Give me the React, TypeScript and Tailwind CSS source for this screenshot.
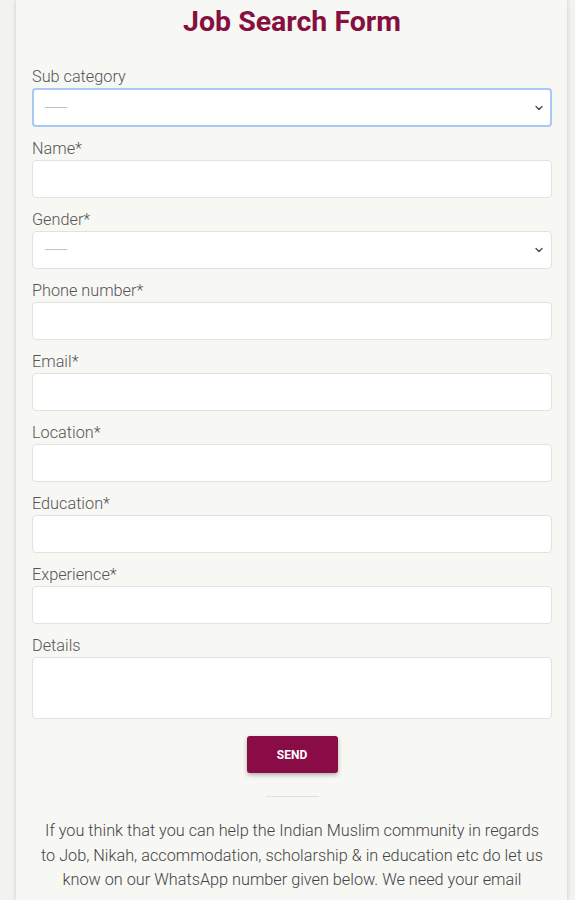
import { ChevronDown } from "lucide-react";

const fields = [
  { label: "Sub category", type: "select", focus: true },
  { label: "Name*", type: "input" },
  { label: "Gender*", type: "select" },
  { label: "Phone number*", type: "input" },
  { label: "Email*", type: "input" },
  { label: "Location*", type: "input" },
  { label: "Education*", type: "input" },
  { label: "Experience*", type: "input" },
];

function Field({ label, type, focus }: { label: string; type: string; focus?: boolean }) {
  return (
    <div className="mb-[11px]">
      <label className="block text-[16.25px] leading-[22px] font-light text-[#555]">{label}</label>
      {type === "select" ? (
        <div
          className={
            focus
              ? "h-[39px] rounded-[4px] bg-white border-2 border-[#a9c8f5] flex items-center justify-between pl-[11px] pr-[5px]"
              : "h-[38px] rounded-[4px] bg-white border border-[#e2e2e0] flex items-center justify-between pl-[12px] pr-[6px]"
          }
        >
          <span className="text-[9px] tracking-[-0.5px] text-[#aaa]">-----------</span>
          <ChevronDown size={12} strokeWidth={2.5} className="text-[#444]" />
        </div>
      ) : (
        <div className="h-[38px] rounded-[4px] bg-white border border-[#e2e2e0]" />
      )}
    </div>
  );
}

export default function App() {
  return (
    <div className="min-h-screen bg-[#f2f2ef] font-['Roboto',sans-serif]">
      <div className="ml-[16px] mr-[8px] min-h-[900px] bg-[#f7f7f4] shadow-[0_0_4px_rgba(0,0,0,0.18)] pl-[16px] pr-[15px] pt-[4px]">
        <h1 className="text-center text-[28.5px] leading-[36px] font-bold text-[#85103f]">Job Search Form</h1>
        <div className="mt-[26px]">
          {fields.map((f) => (
            <Field key={f.label} {...f} />
          ))}
          <label className="block text-[16.25px] leading-[22px] font-light text-[#555]">Details</label>
          <div className="h-[62px] rounded-[4px] bg-white border border-[#e2e2e0]" />
        </div>
        <div className="flex justify-center mt-[17px]">
          <button className="w-[91px] h-[37px] rounded-[3px] bg-[#8a0c47] text-white text-[12px] font-bold shadow-[0_2px_4px_rgba(0,0,0,0.3)]">
            SEND
          </button>
        </div>
        <div className="mx-auto mt-[23px] w-[53px] border-t border-[#e0e0dc]" />
        <p className="mx-auto mt-[22px] max-w-[508px] text-center text-[16.25px] leading-[24.5px] font-light text-[#444]">
          If you think that you can help the Indian Muslim community in regards to Job, Nikah, accommodation,
          scholarship &amp; in education etc do let us know on our WhatsApp number given below. We need your
          email
        </p>
      </div>
    </div>
  );
}
